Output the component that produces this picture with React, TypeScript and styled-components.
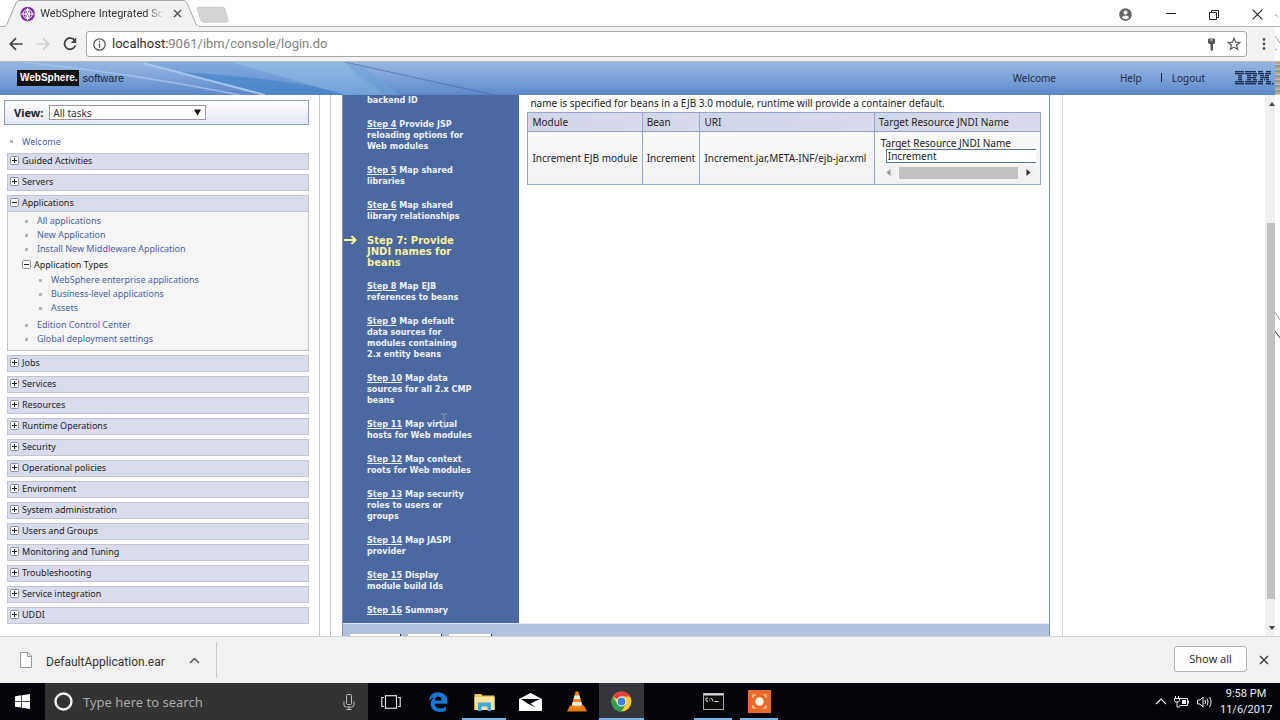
import React from "react";
import styled, { createGlobalStyle, css } from "styled-components";

const GlobalStyle = createGlobalStyle`
  * { box-sizing: border-box; }
  html, body { margin: 0; padding: 0; height: 100%; }
  #root { height: 100%; }
  body { background: #fff; overflow: hidden; font-family: "Noto Sans", "Open Sans", sans-serif; font-size: 10px; color: #222; }
  button, input, select { font-family: inherit; }
  ul, ol, p { margin: 0; padding: 0; list-style: none; }
`;

/* ---------- window frame ---------- */

const Screen = styled.div`
  position: relative;
  display: flex;
  flex-direction: column;
  height: 100vh;
  min-width: 960px;
`;

const TabStrip = styled.header`
  display: flex;
  align-items: flex-end;
  flex: none;
  height: 27px;
  background: linear-gradient(#b4b4b4, #b4b4b4) bottom / 100% 1px no-repeat #fff;
`;

const TabShape = styled.div`
  position: relative;
  display: flex;
  width: 230px;
  height: 27px;
`;

const TabOutline = styled.svg`
  position: absolute;
  inset: 0;
`;

const Tab = styled.div`
  position: relative;
  display: flex;
  align-items: center;
  width: 185px;
  height: 27px;
  padding-left: 20px;
  gap: 5px;
`;

const TabTitle = styled.span`
  flex: 1;
  white-space: nowrap;
  font: 11px/16px Roboto, sans-serif;
  color: #333;
  -webkit-mask-image: linear-gradient(90deg, #000 86%, transparent);
  mask-image: linear-gradient(90deg, #000 86%, transparent);
`;

const IconButton = styled.button<{ $w?: number }>`
  display: flex;
  align-items: center;
  justify-content: center;
  flex: none;
  width: ${(p) => p.$w ?? 16}px;
  height: 20px;
  padding: 0;
  border: 0;
  background: none;
  color: #444;
`;

const WindowControls = styled.div`
  display: flex;
  align-items: center;
  gap: 27px;
  height: 25px;
  margin-left: auto;
  padding-right: 15px;
`;

const Toolbar = styled.div`
  display: flex;
  align-items: center;
  flex: none;
  height: 35px;
  padding: 0 6px 0 8px;
  background: linear-gradient(#fdfdfd, #fdfdfd) right / 5px 100% no-repeat #f2f2f2;
  border-bottom: 1px solid #b9b9b9;
`;

const NavButtons = styled.div`
  display: flex;
  gap: 11px;
  width: 78px;
`;

const AddressBox = styled.div`
  display: flex;
  align-items: center;
  flex: 1;
  height: 26px;
  margin-right: 7px;
  padding: 0 4px 0 6px;
  gap: 6px;
  background: #fff;
  border: 1px solid #a8a8a8;
  border-radius: 3px;
`;

const Address = styled.div`
  flex: 1;
  font: 13px/18px Roboto, sans-serif;
  color: #808080;
  b { font-weight: 400; color: #2e2e2e; }
`;

/* ---------- console banner ---------- */

const Banner = styled.div`
  position: relative;
  display: flex;
  align-items: center;
  flex: none;
  height: 33px;
  padding: 0 6px 2px 17px;
  background:
    repeating-linear-gradient(#b9a878 0 2px, #c9b6cf 2px 3px, #7fa09a 3px 5px) right / 5px 100% no-repeat,
    linear-gradient(#96b6e2, #7ea4da 45%, #5b88cb);
`;

const BannerArt = styled.svg`
  position: absolute;
  left: 0;
  top: 0;
`;

const Brand = styled.div`
  position: relative;
  display: flex;
  align-items: center;
  gap: 4px;
  font: 11px/16px "Liberation Sans", sans-serif;
  color: #16233c;
  b { padding: 0 1px 0 3px; background: #111; color: #fff; font-size: 10px; }
`;

const BannerNav = styled.nav`
  position: relative;
  display: flex;
  align-items: center;
  flex: 1;
  justify-content: flex-end;
  font-size: 10px;
  line-height: 14px;
  a { color: #1c2a44; text-decoration: none; }
  a:first-child { margin-right: 64px; }
  a + a + span { width: 1px; height: 9px; margin: 0 10px 0 19px; background: #16233c; }
`;

const IbmMark = styled.svg`
  position: relative;
  margin-left: 29px;
`;

/* ---------- console body ---------- */

const Console = styled.main`
  display: flex;
  flex: 1;
  min-height: 0;
  overflow: hidden;
  background: #fff;
`;

const Sidebar = styled.aside`
  flex: 0 0 25%;
  padding: 5px 10px 0 4px;
  border-right: 1px solid #c9c9c9;
`;

const ViewBar = styled.div`
  display: flex;
  align-items: center;
  gap: 6px;
  height: 25px;
  padding-left: 9px;
  border: 1px solid #86a3cf;
  background: linear-gradient(#fff, #e3e6f3);
  label { font: bold 11px/14px "Noto Sans", sans-serif; color: #222; }
`;

const SelectBox = styled.div`
  position: relative;
  width: 157px;
  height: 15px;
  select {
    display: block;
    appearance: none;
    width: 100%;
    height: 15px;
    padding: 0 3px;
    border: 1px solid #9a9a9a;
    border-radius: 0;
    background: #fff;
    font-size: 10px;
    line-height: 12px;
    color: #333;
  }
  svg { position: absolute; right: 5px; top: 4px; pointer-events: none; }
`;

const Tree = styled.ul`
  display: flex;
  flex-direction: column;
  gap: 4px;
  padding: 9px 0 0 3px;
`;

const SectionBar = styled.button`
  display: flex;
  align-items: center;
  gap: 3px;
  width: 100%;
  height: 17px;
  padding: 0 2px 2px;
  border: 1px solid #c3c4cd;
  background: #d9dcec;
  font-size: 9px;
  line-height: 13px;
  color: #1d1d1d;
  text-align: left;
`;

const SectionBody = styled.div`
  border: 1px solid #c3c4cd;
  border-top: 0;
  background: #f5f5f6;
  padding: 2px 0 4px 14px;
`;

const LinkList = styled.ul<{ $nested?: boolean }>`
  padding-left: ${(p) => (p.$nested ? 14 : 0)}px;
  padding-bottom: ${(p) => (p.$nested ? 3 : 0)}px;
`;

const LinkItem = styled.li`
  display: flex;
  align-items: center;
  gap: 9px;
  height: 14px;
  padding-left: 3px;
  font-size: 9px;
  line-height: 14px;
  &::before { content: ""; width: 3px; height: 3px; background: #b5b5b5; }
  a { color: #4a62a8; text-decoration: none; }
`;

const WelcomeRow = styled(LinkItem)`
  height: 15px;
`;

const SubToggle = styled.button`
  display: flex;
  align-items: center;
  gap: 3px;
  height: 17px;
  padding: 0;
  border: 0;
  background: none;
  font-size: 9px;
  line-height: 14px;
  color: #1d1d1d;
`;

const Gutter = styled.div`
  flex: 0 0 11px;
  margin-right: 11px;
  border-right: 1px solid #c4c4c8;
`;

const Wizard = styled.section`
  display: flex;
  flex-direction: column;
  flex: 1;
  border: 1px solid #8290b5;
  border-width: 0 1px;
`;

const WizardMain = styled.div`
  display: flex;
  flex: 1;
  min-height: 0;
`;

const StepPanel = styled.ol`
  display: flex;
  flex-direction: column;
  flex: 0 0 25%;
  gap: 13px;
  background: #4b68a0;
`;

const Step = styled.li<{ $current?: boolean }>`
  display: flex;
  font: 700 9px/11px "DejaVu Sans Condensed", "DejaVu Sans", sans-serif;
  color: #eef2fc;
  ${(p) =>
    p.$current &&
    css`
      font: 700 10px/11px "DejaVu Sans", sans-serif;
      color: #f6f29a;
    `}
  a { color: inherit; text-decoration: underline; }
`;

const StepMark = styled.span`
  flex: 0 0 24px;
  padding-left: 1px;
  svg { display: block; }
`;

const StepContent = styled.div`
  flex: 1;
  padding: 0 8px;
`;

const Hint = styled.p`
  padding: 0 3px 1px;
  font-size: 10px;
  line-height: 16px;
`;

const BeanTable = styled.table`
  width: 514px;
  max-width: 100%;
  border-collapse: collapse;
  font-size: 10px;
  line-height: 13px;
  color: #222;
  th, td { padding: 2px 4px; border: 1px solid #97a5cd; text-align: left; font-weight: 400; white-space: nowrap; }
  th { height: 19px; background: linear-gradient(90deg, #cfd6e8, #dad9ee); }
  th:nth-child(1) { width: 22%; }
  th:nth-child(2) { width: 11%; }
  th:nth-child(3) { width: 34%; }
  td { height: 53px; background: linear-gradient(#fafafa, #f1f1f3); }
`;

const JndiCell = styled.div`
  padding: 0 0 0 2px;
  label { display: block; line-height: 12px; }
`;

const ScrollFrame = styled.div`
  margin-left: 5px;
  input {
    display: block;
    width: 100%;
    height: 14px;
    padding: 0 1px;
    border: 1px solid #5c7a9c;
    border-right: 0;
    font-size: 10px;
    line-height: 12px;
    color: #222;
    background: #fff;
  }
`;

const HScroll = styled.div`
  display: flex;
  align-items: center;
  justify-content: space-between;
  height: 13px;
  margin-top: 3px;
  padding: 0 5px 0 0;
  background: #f1f1f1;
  span { width: 119px; height: 12px; background: #c1c1c1; }
`;

const WizardFooter = styled.div`
  display: flex;
  align-items: flex-end;
  flex: none;
  gap: 7px;
  height: 13px;
  padding-left: 7px;
  border-top: 1px solid #dfe6f2;
  background: #b2c1de;
`;

const FooterButton = styled.button<{ $w: number }>`
  width: ${(p) => p.$w}px;
  height: 2px;
  padding: 0;
  border: 0;
  border-right: 1px solid #2b3550;
  background: #fff;
`;

const Margin = styled.div`
  flex: 0 0 18%;
  display: flex;
  padding-left: 12px;
`;

const MarginRule = styled.div`
  flex: 1;
  border-left: 1px solid #d4d4d4;
`;

const VScroll = styled.div`
  display: flex;
  flex-direction: column;
  align-items: flex-end;
  flex: none;
  width: 10px;
  margin-right: 5px;
  padding: 7px 0 6px;
  background: #f0f0f0;
  svg { flex: none; }
`;

const VTrack = styled.div`
  display: flex;
  flex-direction: column;
  flex: 1;
  width: 8px;
  padding: 117px 0 27px;
  &::before { content: ""; flex: 1; background: #c1c1c1; }
`;

/* ---------- download shelf ---------- */

const Shelf = styled.div`
  display: flex;
  align-items: center;
  flex: none;
  height: 47px;
  padding: 0 8px 0 20px;
  background: #f1f1f1;
  border-top: 1px solid #d5d5d5;
`;

const Download = styled.button`
  display: flex;
  align-items: center;
  width: 197px;
  height: 36px;
  padding: 0 16px 0 0;
  border: 0;
  border-right: 1px solid #c6c6c6;
  background: none;
  font: 12px/16px Roboto, sans-serif;
  color: #333;
  span { flex: 1; padding: 4px 0 0 14px; text-align: left; }
`;

const ShowAll = styled.button`
  width: 73px;
  height: 26px;
  margin: 0 9px 2px auto;
  border: 1px solid #b3b3b3;
  border-radius: 3px;
  background: #fdfdfd;
  font: 11px/16px "Open Sans", sans-serif;
  color: #222;
`;

/* ---------- taskbar ---------- */

const Taskbar = styled.footer`
  display: flex;
  flex: none;
  height: 37px;
  background: #03050b;
`;

const TaskButton = styled.button<{ $w: number; $running?: boolean; $active?: boolean }>`
  display: flex;
  align-items: center;
  justify-content: center;
  width: ${(p) => p.$w}px;
  padding: 0;
  border: 0;
  background: ${(p) => (p.$active ? "#34363b" : "transparent")};
  box-shadow: ${(p) => (p.$running ? "inset 0 -2px #7db3e3" : "none")};
`;

const Search = styled.div`
  display: flex;
  align-items: center;
  width: 323px;
  padding: 0 13px 0 8px;
  background: #333;
  input {
    flex: 1;
    min-width: 0;
    padding: 0 9px;
    border: 0;
    background: none;
    font: 13px/18px "Noto Sans", sans-serif;
    color: #aaa;
  }
  input::placeholder { color: #aaa; opacity: 1; }
`;

const TaskGap = styled.div<{ $w: number }>`
  width: ${(p) => p.$w}px;
`;

const Tray = styled.div`
  display: flex;
  align-items: center;
  gap: 7px;
  margin-left: auto;
  padding-right: 8px;
`;

const Clock = styled.div`
  width: 52px;
  font: 11px/16px Roboto, sans-serif;
  color: #eee;
  text-align: center;
  white-space: nowrap;
`;

const TextCursor = styled.svg`
  position: absolute;
  left: 440px;
  top: 413px;
`;

const EdgeMarks = styled.svg`
  position: absolute;
  right: 0;
  top: 0;
  pointer-events: none;
`;

const Toggle = ({ open }: { open?: boolean }) => (
  <svg width="9" height="9" viewBox="0 0 9 9">
    <rect x=".5" y=".5" width="8" height="8" rx="1" fill="#fff" stroke="#8e8e98" />
    <path d={open ? "M2 4.5h5" : "M2 4.5h5M4.5 2v5"} stroke="#222" />
  </svg>
);

const Links = ({ items, nested }: { items: string[]; nested?: boolean }) => (
  <LinkList $nested={nested}>
    {items.map((t) => (
      <LinkItem key={t}><a href="#">{t}</a></LinkItem>
    ))}
  </LinkList>
);

const closedSections = [
  "Jobs", "Services", "Resources", "Runtime Operations", "Security", "Operational policies",
  "Environment", "System administration", "Users and Groups", "Monitoring and Tuning",
  "Troubleshooting", "Service integration", "UDDI",
];

const Section = ({ name, open, children }: { name: string; open?: boolean; children?: React.ReactNode }) => (
  <li>
    <SectionBar aria-expanded={!!open}><Toggle open={open} />{name}</SectionBar>
    {children}
  </li>
);

type StepData = { n?: number; lines: string[]; current?: boolean };

const steps: StepData[] = [
  { lines: ["backend ID"] },
  { n: 4, lines: ["Provide JSP", "reloading options for", "Web modules"] },
  { n: 5, lines: ["Map shared", "libraries"] },
  { n: 6, lines: ["Map shared", "library relationships"] },
  { lines: ["Step 7: Provide", "JNDI names for", "beans"], current: true },
  { n: 8, lines: ["Map EJB", "references to beans"] },
  { n: 9, lines: ["Map default", "data sources for", "modules containing", "2.x entity beans"] },
  { n: 10, lines: ["Map data", "sources for all 2.x CMP", "beans"] },
  { n: 11, lines: ["Map virtual", "hosts for Web modules"] },
  { n: 12, lines: ["Map context", "roots for Web modules"] },
  { n: 13, lines: ["Map security", "roles to users or", "groups"] },
  { n: 14, lines: ["Map JASPI", "provider"] },
  { n: 15, lines: ["Display", "module build Ids"] },
  { n: 16, lines: ["Summary"] },
];

/* Each stripe of the eight-bar style mark: [x, width] runs. */
const ibmStripes: [number, number][][] = [
  [[0, 9], [10, 11], [23, 5], [31, 5]],
  [[0, 9], [10, 12], [23, 6], [30, 6]],
  [[3, 4], [12, 4], [18, 4], [25, 4], [30, 4]],
  [[3, 4], [12, 9], [25, 9]],
  [[3, 4], [12, 4], [18, 4], [25, 3], [29, 1], [31, 3]],
  [[0, 9], [10, 12], [23, 5], [31, 5]],
  [[0, 9], [10, 11], [23, 5], [31, 5]],
];

export default function App() {
  return (
    <Screen>
      <GlobalStyle />
      <TabStrip>
        <TabShape>
          <TabOutline width="230" height="27" viewBox="0 0 230 27">
            <path d="M0 26.5H4Q6 26 7 24L16 3Q17 .5 20 .5H183Q186 .5 187 3L196 24Q197 26.5 200 26.5V27H0Z" fill="#f2f2f2" stroke="#a9a9a9" />
            <path d="M5 27H199" stroke="#f2f2f2" strokeWidth="2" />
            <path d="M199 7H222Q224 7 225 9L228 20Q228 22.500 226 22.500H204Q202 22.500 201 20.500L197 9Q197 7 199 7Z" fill="#d4d4d4" stroke="#c4c4c4" strokeWidth=".6" />
          </TabOutline>
          <Tab>
            <svg width="16" height="16" viewBox="0 0 16 16">
              <circle cx="8" cy="8" r="7.600" fill="#7a2fa5" />
              <g fill="none" stroke="#fff" strokeWidth="1">
                <circle cx="8" cy="8" r="4.800" />
                <ellipse cx="8" cy="8" rx="2" ry="4.800" />
                <path d="M1.500 8H14.500M8 1.500V14.500" strokeWidth="1.300" />
              </g>
              <circle cx="8" cy="8" r="1.500" fill="#fff" />
              <circle cx="8" cy="8" r=".7" fill="#7a2fa5" />
            </svg>
            <TabTitle>WebSphere Integrated So</TabTitle>
            <IconButton aria-label="Close tab">
              <svg width="9" height="9" viewBox="0 0 9 9"><path d="M1 1l7 7M8 1l-7 7" stroke="#555" strokeWidth="1.500" /></svg>
            </IconButton>
          </Tab>
        </TabShape>
        <WindowControls>
          <IconButton aria-label="Profile" $w={22}>
            <svg width="13" height="13" viewBox="0 0 13 13">
              <circle cx="6.500" cy="6.500" r="6.300" fill="#666" />
              <circle cx="6.500" cy="4.500" r="2" fill="#fff" />
              <path d="M2.800 9.500Q4 7.600 6.500 7.600T10.200 9.500Q9 11.200 6.500 11.200T2.800 9.500Z" fill="#fff" />
            </svg>
          </IconButton>
          <IconButton aria-label="Minimize">
            <svg width="10" height="10" viewBox="0 0 10 10"><path d="M0 3.500h10" stroke="#222" /></svg>
          </IconButton>
          <IconButton aria-label="Restore">
            <svg width="10" height="10" viewBox="0 0 10 10"><path d="M.5 2.500h7v7h-7zM2.500 2.500v-2h7v7h-2" fill="none" stroke="#222" /></svg>
          </IconButton>
          <IconButton aria-label="Close">
            <svg width="11" height="11" viewBox="0 0 11 11"><path d="M.7.700l9.600 9.600M10.300.700L.7 10.300" stroke="#222" strokeWidth="1.100" /></svg>
          </IconButton>
        </WindowControls>
      </TabStrip>

      <Toolbar>
        <NavButtons>
          <IconButton aria-label="Back">
            <svg width="14" height="14" viewBox="0 0 14 14"><path d="M13.500 7H1.700M7 1.200L1.300 7 7 12.800" fill="none" stroke="#444" strokeWidth="1.700" /></svg>
          </IconButton>
          <IconButton aria-label="Forward" disabled>
            <svg width="14" height="14" viewBox="0 0 14 14"><path d="M.5 7h11.800M7 1.200L12.700 7 7 12.800" fill="none" stroke="#cfcfcf" strokeWidth="1.700" /></svg>
          </IconButton>
          <IconButton aria-label="Reload">
            <svg width="14" height="14" viewBox="0 0 14 14">
              <path d="M11.700 3.400A5.600 5.600 0 1 0 12.400 8.500" fill="none" stroke="#444" strokeWidth="1.800" />
              <path d="M13.200.600V6H7.800Z" fill="#444" />
            </svg>
          </IconButton>
        </NavButtons>
        <AddressBox>
          <svg width="13" height="13" viewBox="0 0 13 13">
            <circle cx="6.500" cy="6.500" r="5.700" fill="none" stroke="#555" strokeWidth="1.200" />
            <path d="M6.500 5.600V9.700M6.500 3.200V4.600" stroke="#555" strokeWidth="1.400" />
          </svg>
          <Address><b>localhost:</b>9061/ibm/console/login.do</Address>
          <IconButton aria-label="Saved password" $w={18}>
            <svg width="9" height="13" viewBox="0 0 9 13">
              <path d="M1 1.500Q1 .5 2 .5H7Q8 .5 8 1.500V4.500Q8 6 6 6.200V12L4.500 13 3.500 12V6.200Q1 6 1 4.500Z" fill="#555" />
              <path d="M3 2h3" stroke="#ddd" />
            </svg>
          </IconButton>
          <IconButton aria-label="Bookmark">
            <svg width="14" height="14" viewBox="0 0 14 14">
              <path d="M7 1.300L8.600 5.200 12.800 5.500 9.600 8.200 10.600 12.300 7 10.100 3.400 12.300 4.400 8.200 1.200 5.500 5.400 5.200Z" fill="none" stroke="#555" strokeWidth="1.200" />
            </svg>
          </IconButton>
        </AddressBox>
        <IconButton aria-label="Menu" $w={20}>
          <svg width="4" height="14" viewBox="0 0 4 14" fill="#555">
            <circle cx="2" cy="2.500" r="1.400" /><circle cx="2" cy="7" r="1.400" /><circle cx="2" cy="11.500" r="1.400" />
          </svg>
        </IconButton>
      </Toolbar>

      <Banner>
        <BannerArt width="560" height="33" viewBox="0 0 560 33">
          <path d="M140 0H230L345 33H260Z" fill="#5f93d4" opacity=".35" />
          <path d="M178 10Q270 15 330 28L370 33H265Z" fill="#4484c8" opacity=".65" />
          <path d="M230 0H345L385 33H345Z" fill="#86b9e6" opacity=".5" />
          <path d="M345 0L365 5 400 33H375Z" fill="#6ea4d6" opacity=".55" />
          <path d="M22 0Q130 11 240 33" fill="none" stroke="#a9c6ea" strokeWidth="1.600" opacity=".8" />
          <path d="M143 1L265 33" stroke="#a9c9ee" strokeWidth="2" opacity=".9" />
          <path d="M345 0Q420 17 495 33" fill="none" stroke="#41699f" strokeWidth=".8" opacity=".8" />
        </BannerArt>
        <Brand><b>WebSphere.</b>software</Brand>
        <BannerNav>
          <a href="#">Welcome</a>
          <a href="#">Help</a>
          <span />
          <a href="#">Logout</a>
        </BannerNav>
        <IbmMark width="40" height="14" viewBox="0 0 40 14" fill="#1d3157">
          {ibmStripes.map((runs, i) => runs.map(([x, w]) => (
            <rect key={i + "-" + x} x={x + 1} y={i * 2} width={w} height="1.400" />
          )))}
          <rect x="38" y="12" width="1.500" height="1.500" />
        </IbmMark>
      </Banner>

      <Console>
        <Sidebar>
          <ViewBar>
            <label htmlFor="view">View:</label>
            <SelectBox>
              <select id="view" defaultValue="all"><option value="all">All tasks</option></select>
              <svg width="7" height="7" viewBox="0 0 7 7"><path d="M0 .5h7L3.500 6.500z" fill="#111" /></svg>
            </SelectBox>
          </ViewBar>
          <Tree>
            <WelcomeRow><a href="#">Welcome</a></WelcomeRow>
            <Section name="Guided Activities" />
            <Section name="Servers" />
            <Section name="Applications" open>
              <SectionBody>
                <Links items={["All applications", "New Application", "Install New Middleware Application"]} />
                <SubToggle aria-expanded><Toggle open />Application Types</SubToggle>
                <Links nested items={["WebSphere enterprise applications", "Business-level applications", "Assets"]} />
                <Links items={["Edition Control Center", "Global deployment settings"]} />
              </SectionBody>
            </Section>
            {closedSections.map((s) => <Section key={s} name={s} />)}
          </Tree>
        </Sidebar>
        <Gutter />
        <Wizard>
          <WizardMain>
            <StepPanel>
              {steps.map((s) => (
                <Step key={s.lines[0] + (s.n ?? "")} $current={s.current}>
                  <StepMark>
                    {s.current && (
                      <svg width="13" height="11" viewBox="0 0 13 11"><path d="M0 5h11M7.500 1l4 4-4 4" fill="none" stroke="#f6f29a" strokeWidth="2" /></svg>
                    )}
                  </StepMark>
                  <div>
                    {s.lines.map((l, i) => (
                      <div key={l}>
                        {i === 0 && s.n && <><a href="#">Step {s.n}</a>{" "}</>}
                        {l}
                      </div>
                    ))}
                  </div>
                </Step>
              ))}
            </StepPanel>
            <StepContent>
              <Hint>name is specified for beans in a EJB 3.0 module, runtime will provide a container default.</Hint>
              <BeanTable>
                <thead>
                  <tr><th>Module</th><th>Bean</th><th>URI</th><th>Target Resource JNDI Name</th></tr>
                </thead>
                <tbody>
                  <tr>
                    <td>Increment EJB module</td>
                    <td>Increment</td>
                    <td>Increment.jar,META-INF/ejb-jar.xml</td>
                    <td>
                      <JndiCell>
                        <label htmlFor="jndi">Target Resource JNDI Name</label>
                        <ScrollFrame>
                          <input id="jndi" defaultValue="Increment" />
                          <HScroll>
                            <svg width="5" height="7" viewBox="0 0 5 7"><path d="M4.500 0v7L.5 3.500z" fill="#999" /></svg>
                            <span />
                            <svg width="5" height="7" viewBox="0 0 5 7"><path d="M.5 0v7l4-3.500z" fill="#333" /></svg>
                          </HScroll>
                        </ScrollFrame>
                      </JndiCell>
                    </td>
                  </tr>
                </tbody>
              </BeanTable>
            </StepContent>
          </WizardMain>
          <WizardFooter>
            <FooterButton $w={51} aria-label="Previous" />
            <FooterButton $w={34} aria-label="Next" />
            <FooterButton $w={43} aria-label="Cancel" />
          </WizardFooter>
        </Wizard>
        <Margin>
          <MarginRule />
          <VScroll>
            <svg width="6" height="4" viewBox="0 0 6 4"><path d="M0 4h6L3 0z" fill="#444" /></svg>
            <VTrack />
            <svg width="6" height="4" viewBox="0 0 6 4"><path d="M0 0h6L3 4z" fill="#444" /></svg>
          </VScroll>
        </Margin>
      </Console>

      <Shelf>
        <Download>
          <svg width="12" height="16" viewBox="0 0 12 16"><path d="M.5.500h7.500l3.500 3.500v11.500h-11zM7.500.500V4.500h4" fill="#fff" stroke="#999" /></svg>
          <span>DefaultApplication.ear</span>
          <svg width="11" height="7" viewBox="0 0 11 7"><path d="M1 6l4.500-4.500L10 6" fill="none" stroke="#555" strokeWidth="1.500" /></svg>
        </Download>
        <ShowAll>Show all</ShowAll>
        <IconButton aria-label="Close downloads">
          <svg width="10" height="10" viewBox="0 0 10 10"><path d="M1 1l8 8M9 1l-8 8" stroke="#444" strokeWidth="1.600" /></svg>
        </IconButton>
      </Shelf>

      <Taskbar>
        <TaskButton $w={45} aria-label="Start">
          <svg width="15" height="15" viewBox="0 0 15 15" fill="#fff"><path d="M0 2.200L6.300 1.300V7H0zM7 1.200L15 0V7H7zM0 7.800H6.300V13.600L0 12.700zM7 7.800H15V15L7 13.800z" /></svg>
        </TaskButton>
        <Search>
          <svg width="21" height="21" viewBox="0 0 21 21"><circle cx="10.500" cy="10.500" r="8" fill="none" stroke="#f4f4f4" strokeWidth="2.400" /></svg>
          <input aria-label="Search" placeholder="Type here to search" />
          <svg width="12" height="16" viewBox="0 0 12 16" fill="none" stroke="#bbb"><rect x="3.500" y=".5" width="5" height="10" rx="1" /><path d="M1 7.500V11Q1 13 3.500 13H8.500Q11 13 11 11V7.500M6 13V15.500M3.500 15.500h5" /></svg>
        </Search>
        <TaskButton $w={45} aria-label="Task view">
          <svg width="20" height="14" viewBox="0 0 20 14" fill="none" stroke="#ddd" strokeWidth="1.200"><rect x="4.500" y=".7" width="11" height="12.600" /><path d="M3 2.500H.8v9H3M17 2.500h2.200v9H17" /></svg>
        </TaskButton>
        <TaskButton $w={49} aria-label="Edge">
          <svg width="20" height="20" viewBox="0 0 20 20">
            <path d="M.8 9Q2 .3 10.200.300 19.300.500 19.300 9.500V11.700H6.600Q7 16.200 11.800 16.400 15.400 16.400 18 14.700V18.400Q15.500 19.900 11.500 19.900 3 19.600 2.700 12 2.700 7.500 6.800 5.200 3 5.800.8 9ZM6.700 8.500H13.600Q13.600 4.700 10.400 4.600 7.200 4.800 6.700 8.500Z" fill="#1478d4" />
          </svg>
        </TaskButton>
        <TaskButton $w={44} $running aria-label="File Explorer">
          <svg width="21" height="18" viewBox="0 0 21 18">
            <path d="M.5 1H7L8.500 2.500H20.500V17H.5z" fill="#f3c862" /><path d="M.5 4H20.500V17H.5z" fill="#fbe39b" />
            <path d="M4 9.500H17V18H13.500V13.500H7.500V18H4z" fill="#3fa9dc" />
          </svg>
        </TaskButton>
        <TaskButton $w={48} aria-label="Mail">
          <svg width="23" height="18" viewBox="0 0 23 18"><path d="M0 6L11.500 0 23 6V18H0z" fill="#fff" /><path d="M2 6H21L11.500 10.500 17 14.500 9 10.800z" fill="#03050b" /></svg>
        </TaskButton>
        <TaskButton $w={45} aria-label="VLC">
          <svg width="20" height="21" viewBox="0 0 20 21">
            <path d="M3 14.500H17L20 20.500H0z" fill="#e8790f" /><path d="M8.700.5H11.300L16 16.500Q10 19 4 16.500z" fill="#f08a1d" />
            <path d="M7.600 4.500H12.400L13.400 8H6.600zM5.700 11H14.300L15.200 14Q10 16 4.800 14z" fill="#eceae6" />
          </svg>
        </TaskButton>
        <TaskButton $w={45} $running $active aria-label="Chrome">
          <svg width="21" height="21" viewBox="0 0 21 21">
            <circle cx="10.500" cy="10.500" r="10" fill="#fcc934" />
            <path d="M10.500 10.500L1.800 5.500A10 10 0 0 1 19.200 5.500H10.500z" fill="#e0443a" />
            <path d="M1.800 5.500A10 10 0 0 0 10.500 20.500L14.800 13 10.500 10.500 6.200 13z" fill="#2fa150" />
            <circle cx="10.500" cy="10.500" r="4.900" fill="#fff" /><circle cx="10.500" cy="10.500" r="3.900" fill="#3f7fe8" />
          </svg>
        </TaskButton>
        <TaskGap $w={50} />
        <TaskButton $w={38} $running aria-label="Command Prompt">
          <svg width="21" height="17" viewBox="0 0 21 17">
            <rect x=".5" y=".5" width="20" height="16" fill="#0a0a0a" stroke="#a8a8a8" /><path d="M1 1.500h19" stroke="#d5d5d5" strokeWidth="2" />
            <path d="M5 5.200Q2.800 4.500 2.800 6.700T5 8.200M6.800 5.500v.8M6.800 7.500v.8M8.500 5l1.500 3.500M11.500 8.500h4" stroke="#e8e8e8" fill="none" />
          </svg>
        </TaskButton>
        <TaskGap $w={8} />
        <TaskButton $w={38} $running aria-label="Screen recorder">
          <svg width="23" height="23" viewBox="0 0 23 23">
            <rect width="23" height="23" fill="#ea6a2a" /><circle cx="11.500" cy="11.500" r="4.200" fill="#fff3e2" />
            <path d="M5 8V5h3M15 5h3v3M18 15v3h-3M8 18H5v-3" fill="none" stroke="#fbd7b8" strokeWidth="1.200" />
          </svg>
        </TaskButton>
        <Tray>
          <svg width="12" height="7" viewBox="0 0 12 7"><path d="M1 6l5-5 5 5" fill="none" stroke="#eee" strokeWidth="1.200" /></svg>
          <svg width="16" height="12" viewBox="0 0 16 12" fill="none" stroke="#eee"><path d="M5.500 2.500h8v7h-8M14.500 4.500v3" /><path d="M8 4h4v4H8z" fill="#eee" stroke="none" /><path d="M1.500 0v2M4.500 0v2M.5 2.500h5v2q0 1.500-2.500 1.500T.5 4.500zM3 6v5h3" /></svg>
          <svg width="16" height="14" viewBox="0 0 16 14" fill="none" stroke="#eee"><path d="M.5 5h2.500l3-3v10l-3-3H.5zM8 5q1 2 0 4M10 3.500q2.200 3.500 0 7M12.500 2q3.200 5 0 10" /></svg>
          <Clock><div>9:58 PM</div><div>11/6/2017</div></Clock>
        </Tray>
      </Taskbar>

      <TextCursor width="8" height="16" viewBox="0 0 8 16">
        <path d="M1 .8h2L4 1.800 5 .8h2M4 1.800v12M1 15h2l1-1 1 1h2" fill="none" stroke="#8d99b5" />
      </TextCursor>
      <EdgeMarks width="5" height="345" viewBox="0 0 5 345" fill="none" stroke="#8a8a8a">
        <path d="M0 14.500l3 2M0 36l5 7M0 50l2-1M0 312l5 8" strokeWidth=".8" />
        <path d="M0 331l5 7" stroke="#444" />
      </EdgeMarks>
    </Screen>
  );
}
